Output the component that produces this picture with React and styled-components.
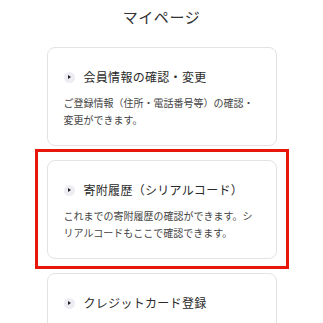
import React from "react";
import styled, { createGlobalStyle, css } from "styled-components";

const Global = createGlobalStyle`
  html, body { margin: 0; padding: 0; background: #ffffff; }
  body {
    font-family: "Noto Sans CJK JP", "Noto Sans", sans-serif;
    color: #333333;
  }
  * { box-sizing: border-box; }
`;

const Page = styled.main`
  display: flex;
  flex-direction: column;
  align-items: center;
  padding-top: 6px;
`;

const Title = styled.h1`
  margin: 0 0 19px;
  font-size: 15px;
  line-height: 22px;
  font-weight: 400;
  letter-spacing: 0.6px;
  color: #333333;
`;

const List = styled.div`
  width: 230px;
  display: flex;
  flex-direction: column;
  gap: 14px;
`;

const Card = styled.a`
  position: relative;
  display: block;
  background: #ffffff;
  border: 1px solid #e3e3e3;
  border-radius: 8px;
  padding: 19px 16px 17px;
  text-decoration: none;
  color: inherit;
  ${(p) =>
    p.$highlighted &&
    css`
      &::after {
        content: "";
        position: absolute;
        top: -12px;
        bottom: -11px;
        left: -13px;
        right: -13px;
        border: 3px solid #e8170c;
        pointer-events: none;
      }
    `}
`;

const CardHead = styled.div`
  display: flex;
  align-items: center;
  gap: 9px;
  height: 20px;
`;

const Bullet = styled.span`
  flex: none;
  width: 11px;
  height: 11px;
  border-radius: 50%;
  background: #ededf3;
  display: flex;
  align-items: center;
  justify-content: center;
  &::before {
    content: "";
    margin-left: 1px;
    width: 0;
    height: 0;
    border-left: 3px solid #222222;
    border-top: 2px solid transparent;
    border-bottom: 2px solid transparent;
  }
`;

const CardTitle = styled.h2`
  margin: 0;
  font-size: 12px;
  line-height: 20px;
  font-weight: 400;
  letter-spacing: 0.3px;
  color: #2a2a2a;
  white-space: nowrap;
`;

const Desc = styled.p`
  margin: 7px 0 0;
  font-size: 10px;
  line-height: 17px;
  color: #444444;
`;

const items = [
  {
    title: "会員情報の確認・変更",
    desc: "ご登録情報（住所・電話番号等）の確認・変更ができます。",
  },
  {
    title: "寄附履歴（シリアルコード）",
    desc: "これまでの寄附履歴の確認ができます。シリアルコードもここで確認できます。",
    highlighted: true,
  },
  {
    title: "クレジットカード登録",
    desc: "お支払いに利用するクレジットカードの登録・変更ができます。",
  },
];

export default function App() {
  return (
    <>
      <Global />
      <Page>
        <Title>マイページ</Title>
        <List>
          {items.map((it) => (
            <Card key={it.title} href="#" $highlighted={it.highlighted}>
              <CardHead>
                <Bullet />
                <CardTitle>{it.title}</CardTitle>
              </CardHead>
              <Desc>{it.desc}</Desc>
            </Card>
          ))}
        </List>
      </Page>
    </>
  );
}
